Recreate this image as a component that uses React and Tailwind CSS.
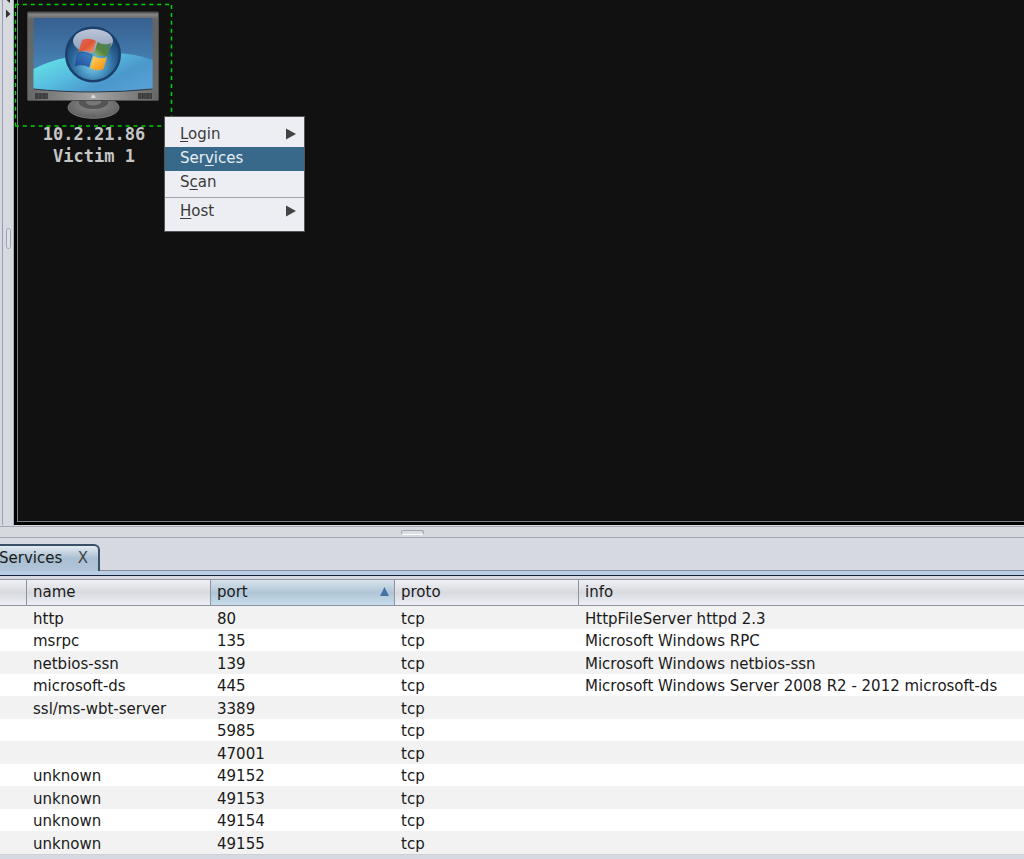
import React from "react";

const services = [
  ["http", "80", "tcp", "HttpFileServer httpd 2.3"],
  ["msrpc", "135", "tcp", "Microsoft Windows RPC"],
  ["netbios-ssn", "139", "tcp", "Microsoft Windows netbios-ssn"],
  ["microsoft-ds", "445", "tcp", "Microsoft Windows Server 2008 R2 - 2012 microsoft-ds"],
  ["ssl/ms-wbt-server", "3389", "tcp", ""],
  ["", "5985", "tcp", ""],
  ["", "47001", "tcp", ""],
  ["unknown", "49152", "tcp", ""],
  ["unknown", "49153", "tcp", ""],
  ["unknown", "49154", "tcp", ""],
  ["unknown", "49155", "tcp", ""],
];

function HostIcon() {
  return (
    <svg width="160" height="126" viewBox="14 2 160 126" aria-hidden="true">
      <defs>
        <linearGradient id="frame" x1="0" y1="0" x2="0" y2="1">
          <stop offset="0" stopColor="#555" />
          <stop offset="0.03" stopColor="#858585" />
          <stop offset="0.08" stopColor="#646464" />
          <stop offset="0.9" stopColor="#6c6c6c" />
          <stop offset="1" stopColor="#858585" />
        </linearGradient>
        <linearGradient id="chin" x1="0" y1="0" x2="1" y2="0">
          <stop offset="0" stopColor="#666" />
          <stop offset="0.5" stopColor="#a5a5a5" />
          <stop offset="1" stopColor="#666" />
        </linearGradient>
        <linearGradient id="sky" x1="0" y1="0" x2="0" y2="1">
          <stop offset="0" stopColor="#365f8e" />
          <stop offset="0.6" stopColor="#4580b2" />
          <stop offset="1" stopColor="#4b91c4" />
        </linearGradient>
        <linearGradient id="wave" x1="0" y1="0.3" x2="0.9" y2="0.9">
          <stop offset="0" stopColor="#62dfe5" />
          <stop offset="0.35" stopColor="#58bfe0" />
          <stop offset="0.7" stopColor="#4b98cc" />
          <stop offset="1" stopColor="#559fd6" />
        </linearGradient>
        <radialGradient id="orb" cx="0.5" cy="0.68" r="0.62">
          <stop offset="0" stopColor="#7cd6ef" />
          <stop offset="0.35" stopColor="#4f9cc8" />
          <stop offset="0.65" stopColor="#2c6698" />
          <stop offset="1" stopColor="#1a3e6b" />
        </radialGradient>
        <linearGradient id="gloss" x1="0" y1="0" x2="0" y2="1">
          <stop offset="0" stopColor="#bcc6d8" />
          <stop offset="1" stopColor="#8b9cb8" />
        </linearGradient>
        <linearGradient id="red" x1="0" y1="0" x2="1" y2="1">
          <stop offset="0" stopColor="#e06a68" />
          <stop offset="0.5" stopColor="#e05536" />
          <stop offset="1" stopColor="#f3a070" />
        </linearGradient>
        <linearGradient id="green" x1="1" y1="0" x2="0" y2="1">
          <stop offset="0" stopColor="#4c7d68" />
          <stop offset="0.6" stopColor="#52843f" />
          <stop offset="1" stopColor="#a0c070" />
        </linearGradient>
        <linearGradient id="blue" x1="0" y1="1" x2="1" y2="0">
          <stop offset="0" stopColor="#1c4c9c" />
          <stop offset="1" stopColor="#4685c2" />
        </linearGradient>
        <linearGradient id="yellow" x1="0" y1="0" x2="1" y2="1">
          <stop offset="0" stopColor="#ffd75a" />
          <stop offset="1" stopColor="#f08a10" />
        </linearGradient>
        <radialGradient id="stand" cx="0.5" cy="0.4" r="0.6">
          <stop offset="0" stopColor="#8e8e8e" />
          <stop offset="1" stopColor="#5f5f5f" />
        </radialGradient>
      </defs>
      <ellipse cx="93.5" cy="107.5" rx="25.5" ry="10.8" fill="url(#stand)" stroke="#7c7c7c" />
      <path d="M79 100H108V104Q104 109 93.5 109Q83 109 79 104Z" fill="#555" />
      <path d="M86 101H101V103Q98 105.500 93.5 105.500Q88 105.500 86 103Z" fill="#777" />
      <rect x="27.5" y="12" width="131" height="88.5" rx="1" fill="url(#frame)" stroke="#4d4d4d" />
      <path d="M28 91H158V100H28Z" fill="url(#chin)" />
      <path d="M33.5 18H152.5V89Q124 92 93 92Q61 92 33.5 89Z" fill="url(#sky)" />
      <path d="M33.5 69C54 58 80 54 107 53Q132 52 152.5 60V89Q124 92 93 92Q61 92 33.5 89Z" fill="url(#wave)" />
      <path d="M33.5 89Q61 92 93 92Q124 92 152.5 89" fill="none" stroke="#30383f" />
      <path d="M35 93H48V99H35ZM138 93H152V99H138Z" fill="#3f3f3f" />
      <path d="M38.5 93V99M42.5 93V99M46.5 93V99M141.5 93V99M145.5 93V99M149.5 93V99" stroke="#555" strokeWidth="0.6" />
      <path d="M91 98L92.5 94.5L95 96L95.5 98Z" fill="#ddd" />
      <circle cx="93" cy="54.5" r="26.8" fill="url(#orb)" stroke="#1b3f6b" strokeWidth="2.4" />
      <ellipse cx="93" cy="41" rx="20" ry="12" fill="url(#gloss)" />
      <path d="M82 40Q89 37 96 41L92.5 53Q86 49 78.500 52Z" fill="url(#red)" />
      <path d="M97.500 42Q104 46 111.500 43L108 55Q101 58 94 54Z" fill="url(#green)" />
      <path d="M78 53Q85 51 92 55L89 67Q82 63 75 66Z" fill="url(#blue)" stroke="#1b4580" strokeWidth="0.500" />
      <path d="M93.500 56Q100 60 107 57L103.500 69Q97 72 90 68Z" fill="url(#yellow)" />
      <path d="M15 4.5H172M15 126H172M15.5 4V126M171.500 5V126" fill="none" stroke="#00d00a" strokeWidth="1.5" strokeDasharray="4 3.9" />
    </svg>
  );
}

function MenuItem({ before = "", hotkey, after, submenu, active }) {
  return (
    <button
      type="button"
      role="menuitem"
      className={
        "flex h-6 w-full items-center justify-between pb-0.5 pl-[15px] pr-2 text-left " +
        (active ? "bg-[#39698a] text-[#e8eef4]" : "text-[#3a3a3a]")
      }
    >
      <span>
        {before}
        <span className="underline underline-offset-2">{hotkey}</span>
        {after}
      </span>
      {submenu && (
        <svg width="10" height="12" viewBox="0 0 10 12" aria-hidden="true">
          <path d="M0 0.500L10 6L0 11.500Z" fill="#444" />
        </svg>
      )}
    </button>
  );
}

export default function App() {
  return (
    <div className="flex h-screen flex-col overflow-hidden bg-[#d6d9e0] font-['DejaVu_Sans',sans-serif] text-[15px] leading-5 text-[#1a1a1a]">
      <main className="relative flex min-h-0 flex-1">
        <div className="w-[3px] shrink-0 border-r border-[#9a9eaa]" />
        <div className="flex w-[11px] shrink-0 flex-col items-center border-r border-[#a9adb8]">
          <svg width="11" height="20" viewBox="0 0 11 20" aria-hidden="true">
            <path d="M7 0V3L3.500 0ZM3 9.500V18L7.500 14Z" fill="#333" />
          </svg>
          <div className="flex w-full flex-1 items-center justify-center">
            <div className="mb-[68px] h-[21px] w-[5px] rounded-sm border border-[#a0a4ae] bg-[#dcdfe5]" />
          </div>
        </div>
        <div className="flex flex-1 bg-black pb-[3px] pl-[3px]">
          <div className="flex-1 border-b border-l border-[#7b7f87] bg-[#111]" />
        </div>

        <figure className="absolute left-3.5 top-0.5 flex w-40 flex-col items-center">
          <HostIcon />
          <figcaption className="-mt-[5px] text-center font-['DejaVu_Sans_Mono',monospace] text-[17px] font-bold leading-[22px] text-[#c6c6c6]">
            10.2.21.86
            <br />
            Victim 1
          </figcaption>
        </figure>

        <div role="menu" className="absolute left-[164px] top-[116px] w-[141px] border border-[#555] bg-[#edeef3] pb-[7px] pt-[6px]">
          <MenuItem hotkey="L" after="ogin" submenu />
          <MenuItem before="Ser" hotkey="v" after="ices" active />
          <MenuItem before="S" hotkey="c" after="an" />
          <hr className="my-[2px] border-t border-[#a0a2b0]" />
          <MenuItem hotkey="H" after="ost" submenu />
        </div>
      </main>

      <div className="mt-px flex h-3 shrink-0 justify-center border-y border-[#a3a6b0] bg-[#d6d9de] pt-[3px]">
        <div className="mr-[200px] h-[5px] w-[23px] rounded-sm border border-[#a0a4ae] border-b-white bg-[#dcdfe4]" />
      </div>

      <section className="shrink-0">
        <div className="flex h-[33px] items-end border-b border-[#888ea4] pt-1.5">
          <div className="-mb-px flex h-[27px] w-[100px] items-center justify-between rounded-tr-md border-r-2 border-t-2 border-[#3a5067] bg-linear-to-b from-[#e4eaf1] via-[#a9bfd3] to-[#b2c5d8] pb-0.5 pr-2.5">
            <button type="button" className="-ml-px">Services</button>
            <button type="button" aria-label="Close Services" className="text-[#444]">X</button>
          </div>
        </div>
        <div className="h-[5px] border-b border-[#18213c] bg-[#b9cde4]" />
        <div className="h-[3px]" />
        <table className="w-full table-fixed border-collapse whitespace-nowrap text-left">
          <colgroup>
            <col className="w-[27px]" />
            <col className="w-[184px]" />
            <col className="w-[184px]" />
            <col className="w-[184px]" />
            <col />
          </colgroup>
          <thead>
            <tr className="h-[27px] bg-linear-to-b from-[#f2f3f5] via-[#d8dae0] to-[#eef1f9] shadow-[inset_0_1px_#9497a4,inset_0_-1px_#8e929c]">
              <td className="p-0 shadow-[inset_-1px_0_#9094a0]" />
              <th className="p-0 pb-0.5 pl-1.5 font-normal shadow-[inset_-1px_0_#9094a0]">name</th>
              <th aria-sort="ascending" className="bg-linear-to-b from-[#dbe6ef] via-[#b0c6d6] to-[#c9dfee] p-0 pb-0.5 pl-1.5 font-normal shadow-[inset_-1px_0_#9094a0,inset_0_1px_#9497a4,inset_0_-1px_#8e929c]">
                <div className="flex items-center justify-between pr-1.5">
                  port
                  <svg width="9" height="9" viewBox="0 0 9 9" aria-hidden="true">
                    <path d="M4.500 0L9 9H0Z" fill="#4374a5" />
                  </svg>
                </div>
              </th>
              <th className="p-0 pb-0.5 pl-1.5 font-normal shadow-[inset_-1px_0_#9094a0]">proto</th>
              <th className="p-0 pb-0.5 pl-1.5 font-normal">info</th>
            </tr>
          </thead>
          <tbody>
            {services.map(([name, port, proto, info]) => (
              <tr key={port} className="h-[23px] bg-[#f2f2f2] even:h-[22px] even:bg-white">
                <td className="p-0" />
                <td className="p-0 pl-1.5 pt-0.5">{name}</td>
                <td className="p-0 pl-1.5 pt-0.5">{port}</td>
                <td className="p-0 pl-1.5 pt-0.5">{proto}</td>
                <td className="p-0 pl-1.5 pt-0.5">{info}</td>
              </tr>
            ))}
          </tbody>
        </table>
        <div className="h-[5px] border-t border-[#cdd0da]" />
      </section>
    </div>
  );
}
